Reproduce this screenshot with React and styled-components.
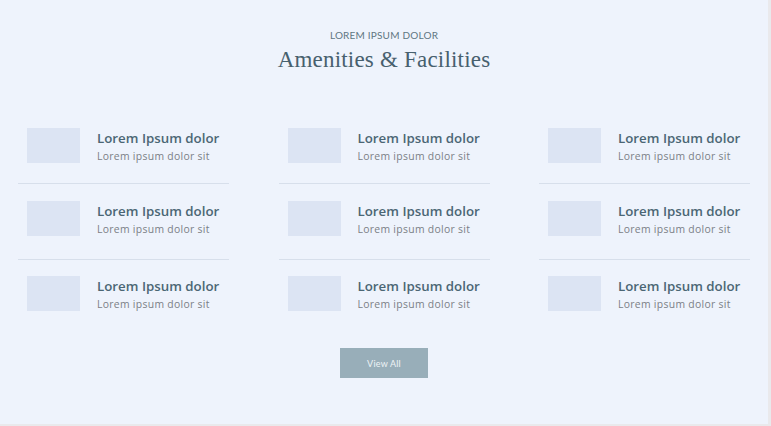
import React from "react";
import styled, { createGlobalStyle } from "styled-components";

const Global = createGlobalStyle`
  html, body { margin: 0; padding: 0; background: #e9e9ec; }
  body { font-family: "Open Sans", sans-serif; }
`;

const Section = styled.section`
  width: 768px;
  height: 424px;
  box-sizing: border-box;
  background: #eef3fc;
  padding: 29px 18px 0;
  display: flex;
  flex-direction: column;
  align-items: center;
`;

const Eyebrow = styled.div`
  font-family: "Lato", sans-serif;
  font-size: 10px;
  letter-spacing: 0.2px;
  color: #5f7682;
  line-height: 12px;
`;

const Heading = styled.h2`
  margin: 4px 0 0;
  font-family: "Liberation Serif", serif;
  font-weight: 400;
  font-size: 23px;
  line-height: 30px;
  color: #47606e;
  letter-spacing: 0.2px;
`;

const Grid = styled.div`
  align-self: stretch;
  margin-top: 36px;
  display: grid;
  grid-template-columns: repeat(3, 211px);
  justify-content: space-between;
`;

const rowPad = ["17px 9px 20px", "17px 9px 23px", "16px 9px 0"];

const Cell = styled.div`
  display: flex;
  align-items: center;
  padding: ${(p) => rowPad[p.$row]};
  border-bottom: ${(p) => (p.$row === 2 ? "none" : "1px solid #d7dfeb")};
`;

const Thumb = styled.div`
  width: 53px;
  height: 35px;
  flex: none;
  background: #dce4f3;
`;

const Text = styled.div`
  margin-left: 17px;
  display: flex;
  flex-direction: column;
`;

const Title = styled.div`
  font-family: "Open Sans", sans-serif;
  font-weight: 600;
  font-size: 13.3px;
  line-height: 18px;
  color: #4b6674;
  white-space: nowrap;
`;

const Sub = styled.div`
  margin-top: 2px;
  font-family: "Open Sans", sans-serif;
  font-size: 10.4px;
  letter-spacing: 0.3px;
  line-height: 14px;
  color: #7b7f86;
  white-space: nowrap;
`;

const Button = styled.button`
  margin-top: 37px;
  width: 88px;
  height: 30px;
  border: none;
  background: #98aeb9;
  color: #eef3f6;
  font-family: "Lato", sans-serif;
  font-size: 9px;
  letter-spacing: 0.2px;
  cursor: pointer;
`;

export default function App() {
  const rows = [0, 1, 2];
  const cols = [0, 1, 2];
  return (
    <>
      <Global />
      <Section>
        <Eyebrow>LOREM IPSUM DOLOR</Eyebrow>
        <Heading>Amenities &amp; Facilities</Heading>
        <Grid>
          {rows.map((r) =>
            cols.map((c) => (
              <Cell key={`${r}-${c}`} $row={r}>
                <Thumb />
                <Text>
                  <Title>Lorem Ipsum dolor</Title>
                  <Sub>Lorem ipsum dolor sit</Sub>
                </Text>
              </Cell>
            ))
          )}
        </Grid>
        <Button>View All</Button>
      </Section>
    </>
  );
}
